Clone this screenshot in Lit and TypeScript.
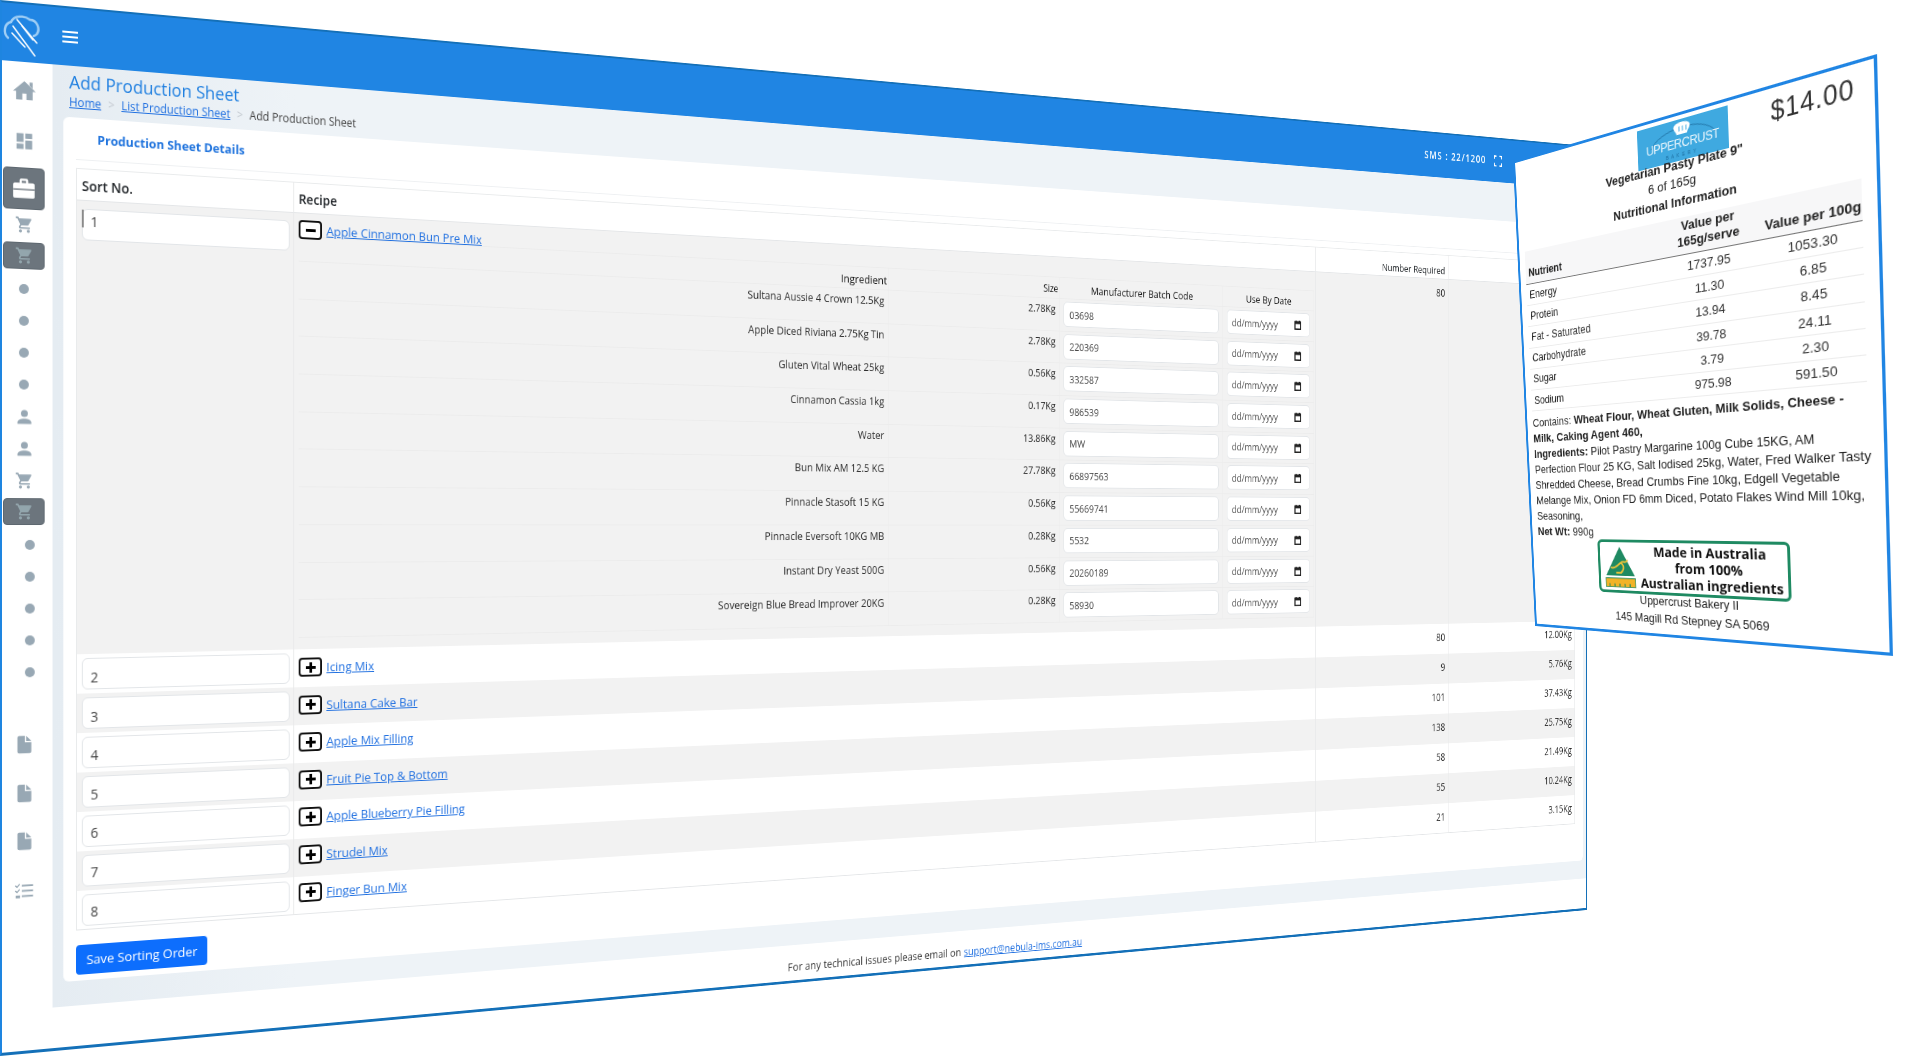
import { LitElement, html, css, svg } from 'lit';
import { customElement } from 'lit/decorators.js';

type Pt = [number, number];

// rect of w x h onto a quad (tl, tr, br, bl), as a css matrix3d
function quadMatrix(w: number, h: number, q: Pt[]) {
  const [[x0, y0], [x1, y1], [x2, y2], [x3, y3]] = q;
  const sx = x0 - x1 + x2 - x3;
  const sy = y0 - y1 + y2 - y3;
  const dx1 = x1 - x2, dx2 = x3 - x2, dy1 = y1 - y2, dy2 = y3 - y2;
  const det = dx1 * dy2 - dx2 * dy1;
  const g = (sx * dy2 - dx2 * sy) / det;
  const k = (dx1 * sy - sx * dy1) / det;
  const a = x1 - x0 + g * x1, b = x3 - x0 + k * x3;
  const d = y1 - y0 + g * y1, e = y3 - y0 + k * y3;
  return `matrix3d(${a / w},${d / w},0,${g / w},${b / h},${e / h},0,${k / h},0,0,1,0,${x0},${y0},0,1)`;
}

const icon = (d: unknown, cls = '') => html`<svg class="ico ${cls}" viewBox="0 0 24 24">${d}</svg>`;
const P = {
  home: svg`<path d="M12 3 1 13h3v8h6v-6h4v6h6v-8h3z"/><path d="M17 4h3v6l-3-2.7z"/>`,
  dash: svg`<path d="M13 3v6h8V3zM13 21h8V11h-8zM3 21h8v-6H3zM3 13h8V3H3z"/>`,
  brief: svg`<path fill-rule="evenodd" d="M9.5 3h5A1.5 1.5 0 0 1 16 4.500V7h4.500A1.500 1.500 0 0 1 22 8.500v11a1.500 1.500 0 0 1-1.500 1.500h-17A1.500 1.500 0 0 1 2 19.500v-11A1.500 1.500 0 0 1 3.500 7H8V4.500A1.500 1.500 0 0 1 9.500 3zM14 7V5h-4v2z"/><path d="M2 13h20" stroke="#6c757d" stroke-width="1.200"/>`,
  cart: svg`<path d="M17 18a2 2 0 1 1 0 4 2 2 0 0 1 0-4M1 2h3.270l.940 2H20a1 1 0 0 1 1 1c0 .170-.050.340-.120.500l-3.580 6.470c-.340.610-1 1.030-1.750 1.030H8.100l-.900 1.630-.030.120a.250.250 0 0 0 .250.250H19v2H7a2 2 0 0 1-2-2c0-.350.090-.680.240-.960l1.360-2.450L3 4H1zM7 18a2 2 0 1 1 0 4 2 2 0 0 1 0-4z"/>`,
  user: svg`<path d="M12 4a4 4 0 1 1 0 8 4 4 0 0 1 0-8zM12 14c4.400 0 8 1.800 8 4v2H4v-2c0-2.200 3.600-4 8-4z"/>`,
  doc: svg`<path d="M14 2v6h6zM6 2C4.900 2 4 2.900 4 4v16c0 1.100.900 2 2 2h12c1.100 0 2-.900 2-2V9.500h-7.500V2z"/>`,
  list: svg`<path d="M9 6h13v2H9zM9 12h13v2H9zM9 18h13v2H9zM2 6l1.500 1.500L6 4.500l1 1-3.500 4L1 7zM2 12l1.500 1.500L6 10.500l1 1-3.500 4L1 13zM2 18h5v3H2z"/>`,
};

const NAV: { kind: string; ico?: unknown; gap?: number; h?: number; sub?: boolean; big?: boolean }[] = [
  { kind: 'item', ico: P.home, h: 40, big: true },
  { kind: 'item', ico: P.dash, h: 40, gap: 11 },
  { kind: 'tile', ico: P.brief, h: 42, gap: 7 },
  { kind: 'item', ico: P.cart, h: 30 },
  { kind: 'tile', ico: P.cart, h: 27, gap: 3 },
  { kind: 'dot', gap: 4 }, { kind: 'dot' }, { kind: 'dot' }, { kind: 'dot' },
  { kind: 'item', ico: P.user, h: 32 }, { kind: 'item', ico: P.user, h: 32 }, { kind: 'item', ico: P.cart, h: 32 },
  { kind: 'tile', ico: P.cart, h: 27, gap: 2 },
  { kind: 'dot', sub: true, gap: 4 }, { kind: 'dot', sub: true }, { kind: 'dot', sub: true }, { kind: 'dot', sub: true }, { kind: 'dot', sub: true },
  { kind: 'item', ico: P.doc, h: 48, gap: 32 }, { kind: 'item', ico: P.doc, h: 48, gap: 1 }, { kind: 'item', ico: P.doc, h: 48 },
  { kind: 'item', ico: P.list, h: 48, gap: 1 },
];

const INGREDIENTS = [
  ['Sultana Aussie 4 Crown 12.5Kg', '2.78Kg', '03698'],
  ['Apple Diced Riviana 2.75Kg Tin', '2.78Kg', '220369'],
  ['Gluten Vital Wheat 25kg', '0.56Kg', '332587'],
  ['Cinnamon Cassia 1kg', '0.17Kg', '986539'],
  ['Water', '13.86Kg', 'MW'],
  ['Bun Mix AM 12.5 KG', '27.78Kg', '66897563'],
  ['Pinnacle Stasoft 15 KG', '0.56Kg', '55669741'],
  ['Pinnacle Eversoft 10KG MB', '0.28Kg', '5532'],
  ['Instant Dry Yeast 500G', '0.56Kg', '20260189'],
  ['Sovereign Blue Bread Improver 20KG', '0.28Kg', '58930'],
];

const RECIPES = [
  ['Icing Mix', '80', '12.00Kg'],
  ['Sultana Cake Bar', '9', '5.76Kg'],
  ['Apple Mix Filling', '101', '37.43Kg'],
  ['Fruit Pie Top & Bottom', '138', '25.75Kg'],
  ['Apple Blueberry Pie Filling', '58', '21.49Kg'],
  ['Strudel Mix', '55', '10.24Kg'],
  ['Finger Bun Mix', '21', '3.15Kg'],
];

const NUTRIENTS = [
  ['Energy', '1737.95', '1053.30'],
  ['Protein', '11.30', '6.85'],
  ['Fat - Saturated', '13.94', '8.45'],
  ['Carbohydrate', '39.78', '24.11'],
  ['Sugar', '3.79', '2.30'],
  ['Sodium', '975.98', '591.50'],
];

@customElement('production-window')
export class ProductionWindow extends LitElement {
  static styles = css`
    :host { display: block; width: 2193px; height: 1056px; position: relative; background: #fff; font-family: 'Open Sans', sans-serif; color: #212529; font-size: 13px; filter: blur(0.4px); }
    :host::after { content: ''; position: absolute; inset: 0; pointer-events: none; border: solid #1470b8; border-width: 2px 2px 3px 2px; border-left-color: #1e85e0; }
    a { color: #1f6fe0; text-decoration: underline; }
    .top { height: 60px; background: #2085e3; display: flex; align-items: center; padding-left: 2px; color: #fff; }
    .logo { width: 42px; height: 44px; margin-top: 4px; }
    .burger { width: 16px; height: 12px; margin-left: 19px; margin-top: 2px; display: flex; flex-direction: column; justify-content: space-between; }
    .burger i { display: block; height: 2px; background: #fff; }
    .sms { margin-left: auto; font-size: 14px; font-weight: 600; letter-spacing: 1.400px; }
    .full { width: 15px; height: 15px; margin: 2px 159px 0 14px; fill: none; stroke: #fff; stroke-width: 2; }
    .body { display: flex; height: 996px; }
    .side { width: 53px; flex: none; padding: 8px 8px 0 3px; box-sizing: border-box; display: flex; flex-direction: column; align-items: stretch; }
    .ico { width: 21px; height: 21px; fill: #98a8b4; }
    .ico.big { width: 25px; height: 25px; }
    .ico.sm { width: 19px; height: 19px; }
    .item { display: flex; align-items: center; justify-content: center; }
    .tile { display: flex; align-items: center; justify-content: center; background: #6c757d; border-radius: 4px; border: 1px solid #5e6870; box-sizing: border-box; }
    .tile .ico.w { fill: #fff; width: 26px; height: 26px; }
    .tile .ico.sm { fill: #93a6ad; }
    .dot { height: 32px; display: flex; align-items: center; justify-content: center; }
    .dot i { width: 10px; height: 10px; border-radius: 50%; background: #98a8b4; }
    .dot.sub { padding-left: 12px; }
    .main { flex: 1; display: flex; flex-direction: column; min-width: 0; }
    .bg { height: 952px; background: linear-gradient(90deg, #e5ecf2, #eef3f7 260px); padding: 4px 8px 0 11px; box-sizing: border-box; }
    h1 { font-size: 17.700px; line-height: 24px; font-weight: 500; color: #1f7fe0; margin: 0 0 0 6px; }
    .crumbs { display: flex; margin-left: 6px; line-height: 16px; height: 24px; font-size: 11.700px; color: #444; }
    .crumbs span { width: 21px; text-align: center; color: #c2c8ce; }
    .card { height: 875px; background: #fff; border-radius: 6px; padding: 0 15px 0 13px; box-sizing: border-box; display: flex; flex-direction: column; }
    .card h2 { margin: 0; font-size: 12.700px; font-weight: 700; color: #1f73dd; padding: 11px 0 0 22px; height: 43px; box-sizing: border-box; border-bottom: 1px solid #eef0f2; line-height: 20px; }
    .table { margin-top: 8px; border: 1px solid #e9ebec; border-bottom-color: #e4e6e8; height: 773px; box-sizing: border-box; }
    .row { display: grid; grid-template-columns: 232px 1397px 230px 1fr; }
    .row > div { border-right: 1px solid #e8e9ea; box-sizing: border-box; }
    .row > div:last-child { border-right: 0; }
    .head { height: 32px; border-bottom: 1px solid #e4e6e8; box-sizing: border-box; }
    .head b { font-size: 13.500px; font-weight: 600; display: block; padding: 7px 5px; line-height: 20px; }
    .head .rq { font-size: 13.300px; font-weight: 500; padding: 11px 5px; text-align: right; line-height: 18px; }
    .rec { height: 40px; }
    .gray { background: #f2f2f2; }
    .sort { padding: 4px 4px 0 5px; }
    .field { background: #fff; border: 1px solid #e2e5e8; border-radius: 6px; box-sizing: border-box; color: #444; display: flex; align-items: center; }
    .sort .field { height: 32px; padding-left: 8px; font-size: 14px; }
    .first .sort { padding-top: 8px; }
    .first .field.n { position: relative; padding-bottom: 7px; }
    .first .field.n::before { content: ''; position: absolute; left: -1px; top: 0; bottom: 12px; width: 1.500px; background: #8a8a8a; }
    .line { display: flex; align-items: center; gap: 5px; height: 20px; margin: 7px 0 0 5px; font-size: 13.200px; }
    .toggle { width: 26px; height: 20px; box-sizing: border-box; border: 2.500px solid #111; border-radius: 4px; background: #fff; display: flex; align-items: center; justify-content: center; position: relative; }
    .toggle i { position: absolute; background: #000; width: 11px; height: 3px; }
    .toggle i.v { width: 3px; height: 11px; }
    .num { font-size: 14px; text-align: right; padding: 9px 5px 0 0; line-height: 18px; color: #2a2a2a; }
    .first { height: 460px; }
    .inner { margin: -3px 0 0 5px; width: 1389px; }
    .irow { display: grid; grid-template-columns: 736px 248px 255px 150px; height: 39.700px; border-bottom: 1px solid #ececec; box-sizing: border-box; }
    .irow.ih { height: 27px; border-top: 1px solid #ececec; font-weight: 500; font-size: 13.300px; }
    .irow > div { border-right: 1px solid #ececec; box-sizing: border-box; padding: 3px 5px 0; line-height: 18px; text-align: right; color: #2a2a2a; }
    .irow.ih > div { padding: 5px 1px 0; color: #111; }
    .irow.ih .sz { font-size: 12px; }
    .irow.ih .c { text-align: center; }
    .irow .in { padding: 3px 6px 0 6px; }
    .irow .field { height: 31px; padding: 0 8px; font-size: 13px; text-align: left; }
    .date { justify-content: space-between; padding: 0 13px 0 7px !important; color: #555; }
    .cal { width: 13px; height: 13px; fill: none; stroke: #222; stroke-width: 2; }
    .save { display: block; width: 138px; height: 30px; margin: 15px 0 0; border-radius: 4px; background: #0d6efd; color: #fff; font-size: 13.300px; line-height: 30px; text-align: center; }
    .foot { height: 44px; display: flex; justify-content: center; align-items: center; padding-top: 6px; box-sizing: border-box; font-size: 13px; gap: 4px; color: #333; }
  `;

  render() {
    return html`
      <div class="top">
        <svg class="logo" viewBox="0 0 42 44" fill="none" stroke-linecap="round">
          <path d="M6 27C1 23 2 13 9 11 12 4 22 3 28 7 35 7 39 15 35 21 34 22 33 23 32 23" stroke="#9fcef5" stroke-width="2.400"/>
          <path d="M15 8 35 30M11 15 33 43M10 22 23 35M20 14 31 27" stroke="#fff" stroke-width="1.500"/>
        </svg>
        <div class="burger"><i></i><i></i><i></i></div>
        <div class="sms">SMS : 22/1200</div>
        <svg class="full" viewBox="0 0 16 16"><path d="M1 5V1h4M11 1h4v4M15 11v4h-4M5 15H1v-4"/></svg>
      </div>
      <div class="body">
        <nav class="side">
          ${NAV.map((n) => {
            const gap = `margin-top:${n.gap ?? 0}px`;
            if (n.kind === 'dot') return html`<div class="dot ${n.sub ? 'sub' : ''}" style=${gap}><i></i></div>`;
            const cls = n.ico === P.brief ? 'w' : n.ico === P.cart ? 'sm' : n.big ? 'big' : '';
            return html`<div class=${n.kind} style="${gap};height:${n.h}px">${icon(n.ico, cls)}</div>`;
          })}
        </nav>
        <div class="main">
          <div class="bg">
            <h1>Add Production Sheet</h1>
            <div class="crumbs"><a href="#">Home</a><span>&gt;</span><a href="#">List Production Sheet</a><span>&gt;</span>Add Production Sheet</div>
            <div class="card">
              <h2>Production Sheet Details</h2>
              <div class="table">
                <div class="row head">
                  <div><b>Sort No.</b></div><div><b>Recipe</b></div><div><b class="rq">Number Required</b></div><div></div>
                </div>
                <div class="row first gray">
                  <div class="sort"><div class="field n">1</div></div>
                  <div>
                    <div class="line"><span class="toggle"><i></i></span><a href="#">Apple Cinnamon Bun Pre Mix</a></div>
                    ${this.renderInner()}
                  </div>
                  <div class="num">80</div>
                  <div class="num"></div>
                </div>
                ${RECIPES.map((r, i) => html`
                  <div class="row rec ${i % 2 ? 'gray' : ''}">
                    <div class="sort"><div class="field" style="padding-top:${7 - i * 0.8}px">${i + 2}</div></div>
                    <div><div class="line" style="margin-top:${9 - i * 0.4}px"><span class="toggle"><i></i><i class="v"></i></span><a href="#">${r[0]}</a></div></div>
                    <div class="num">${r[1]}</div>
                    <div class="num">${r[2]}</div>
                  </div>`)}
              </div>
              <div class="save">Save Sorting Order</div>
            </div>
          </div>
          <div class="foot">For any technical issues please email on <a href="#">support@nebula-ims.com.au</a></div>
        </div>
      </div>
    `;
  }

  renderInner() {
    return html`
      <div class="inner">
        <div class="irow ih"><div>Ingredient</div><div class="sz">Size</div><div class="c">Manufacturer Batch Code</div><div class="c">Use By Date</div></div>
        ${INGREDIENTS.map((r) => html`
          <div class="irow">
            <div>${r[0]}</div><div>${r[1]}</div>
            <div class="in"><div class="field">${r[2]}</div></div>
            <div class="in"><div class="field date">dd/mm/yyyy<svg class="cal" viewBox="0 0 14 14"><path d="M2 3h10v10H2zM2 5h10M4 1v2M10 1v2"/></svg></div></div>
          </div>`)}
      </div>
    `;
  }
}

@customElement('nutrition-label')
export class NutritionLabel extends LitElement {
  static styles = css`
    :host { display: block; width: 420px; height: 540px; box-sizing: border-box; background: #fff; border: 3px solid #2085e3; font-family: 'Liberation Sans', Arial, sans-serif; color: #222; position: relative; font-size: 13px; filter: blur(0.4px); }
    .price { position: absolute; right: 18px; top: 2px; font-size: 25px; line-height: 38px; letter-spacing: 0.800px; color: #333; }
    .brand { width: 105px; height: 41px; margin: 4px 0 0 165px; background: #3fa9e0; color: #eaf6fc; text-align: center; position: relative; overflow: hidden; }
    .brand svg { position: absolute; left: 0; top: 0; width: 105px; height: 41px; }
    .brand b { position: absolute; left: 0; right: 0; top: 16px; font-weight: 400; font-size: 13px; line-height: 16px; letter-spacing: -0.500px; }
    .brand i { position: absolute; left: 0; right: 0; top: 31px; font-style: normal; font-size: 5px; letter-spacing: 3px; color: #1d6d9f; line-height: 8px; }
    .titles { width: 398px; text-align: center; position: relative; left: 5px; margin-top: -5px; }
    .titles div { line-height: 18px; }
    .titles .b { font-weight: 700; font-size: 13.500px; }
    .titles .s { font-size: 13.500px; }
    .titles .b:last-child { margin-top: 1px; }
    table { position: absolute; left: 8px; top: 102px; width: 392px; border-collapse: collapse; font-size: 12.500px; table-layout: fixed; }
    thead tr { background: #f7f7f8; }
    th { font-weight: 700; font-size: 13.500px; vertical-align: bottom; padding: 1px 0 4px; line-height: 16px; text-align: center; border-bottom: 1.500px solid #777; }
    th:first-child, td:first-child { text-align: left; padding-left: 4px; width: 170px; }
    th:first-child { font-size: 12.500px; }
    th:nth-child(2) { width: 122px; }
    td { text-align: center; height: 24.200px; box-sizing: border-box; padding: 0; border-bottom: 1px solid #ececec; }
    td + td { font-size: 13.500px; color: #333; }
    .text { position: absolute; left: 8px; top: 290px; font-size: 13.100px; line-height: 18px; white-space: nowrap; }
    .text b { font-size: 13.400px; }
    .badge { position: absolute; left: 92px; top: 433px; width: 228px; height: 59px; box-sizing: border-box; border: 3px solid #1f8a62; border-radius: 6px; display: flex; align-items: center; padding-left: 5px; }
    .badge svg { width: 42px; height: 50px; flex: none; }
    .badge div { flex: 1; text-align: center; font-family: 'Open Sans', sans-serif; font-weight: 700; font-size: 14.800px; line-height: 17px; color: #111; white-space: nowrap; }
    .addr { position: absolute; left: 88px; width: 232px; top: 489px; text-align: center; font-size: 13px; line-height: 19px; }
  `;

  render() {
    return html`
      <div class="price">$14.00</div>
      <div class="brand">
        <svg viewBox="0 0 105 41" fill="none">
          <path d="M16 23C26 5 78 2 91 21" stroke="#1d6d9f" stroke-width="0.800"/>
          <path d="M44 6c2-4 16-4 18 0 2 3-2 5-3 9H47c-1-4-5-6-3-9z" fill="#fff"/>
          <path d="M50 7v5M54 7v5M58 7v5" stroke="#3fa9e0" stroke-width="1"/>
        </svg>
        <b>UPPERCRUST</b><i>BAKERY</i>
      </div>
      <div class="titles">
        <div class="b">Vegetarian Pasty Plate 9"</div>
        <div class="s">6 of 165g</div>
        <div class="b">Nutritional Information</div>
      </div>
      <table>
        <thead><tr><th>Nutrient</th><th>Value per<br />165g/serve</th><th>Value per 100g</th></tr></thead>
        <tbody>${NUTRIENTS.map((n) => html`<tr><td>${n[0]}</td><td>${n[1]}</td><td>${n[2]}</td></tr>`)}</tbody>
      </table>
      <div class="text">
        Contains: <b>Wheat Flour, Wheat Gluten, Milk Solids, Cheese -<br />Milk, Caking Agent 460,</b><br />
        <b>Ingredients:</b> Pilot Pastry Margarine 100g Cube 15KG, AM<br />
        Perfection Flour 25 KG, Salt Iodised 25kg, Water, Fred Walker Tasty<br />
        Shredded Cheese, Bread Crumbs Fine 10kg, Edgell Vegetable<br />
        Melange Mix, Onion FD 6mm Diced, Potato Flakes Wind Mill 10kg,<br />
        Seasoning,<br />
        <b>Net Wt:</b> 990g
      </div>
      <div class="badge">
        <svg viewBox="0 0 38 44">
          <path d="M19 2 36 31H2z" fill="#1f8a62"/>
          <path d="M8 23C13 25 16 20 20 18 24 15 25 20 28 15M20 18C24 21 24 25 20 28H14" fill="none" stroke="#e9c23a" stroke-width="1.800"/>
          <rect x="1.500" y="33.500" width="35" height="9" fill="#f2b327" stroke="#1f8a62" stroke-width="0.800"/>
          <path d="M6 42v-3M12 42v-3M18 42v-3M24 42v-3M30 42v-3" stroke="#1f8a62" stroke-width="1.200"/>
        </svg>
        <div>Made in Australia<br />from 100%<br />Australian ingredients</div>
      </div>
      <div class="addr">Uppercrust Bakery II<br />145 Magill Rd Stepney SA 5069</div>
    `;
  }
}

@customElement('app-root')
export class AppRoot extends LitElement {
  static styles = css`
    :host { display: block; width: 1920px; height: 1060px; position: relative; overflow: hidden; background: #fff; }
    .sheet { position: absolute; left: 0; top: 0; transform-origin: 0 0; }
  `;

  render() {
    const win = quadMatrix(2193, 1056, [[0, 0], [1587, 146], [1587, 910], [0, 1056]]);
    const label = quadMatrix(420, 540, [[1513, 161], [1877, 54], [1893, 656], [1535, 626]]);
    return html`
      <production-window class="sheet" style="transform:${win}"></production-window>
      <nutrition-label class="sheet" style="transform:${label}"></nutrition-label>
    `;
  }
}
